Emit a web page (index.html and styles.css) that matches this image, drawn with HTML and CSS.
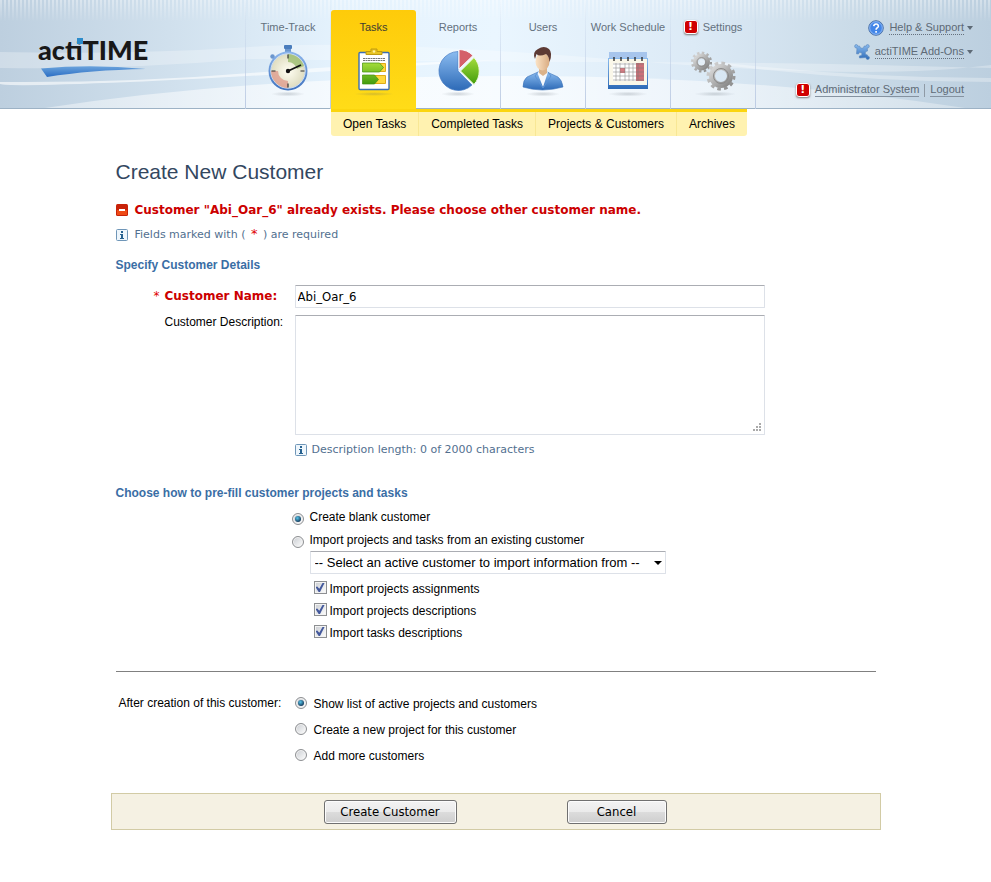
FILE: index.html
```html
<!DOCTYPE html>
<html lang="en">
<head>
<meta charset="utf-8">
<title>actiTIME - Create New Customer</title>
<link rel="stylesheet" href="styles.css">
</head>
<body>
<header class="header">
  <svg class="waves" viewBox="0 0 991 108" preserveAspectRatio="none" aria-hidden="true">
    <defs>
      <linearGradient id="hill" x1="0" x2="1" y1="0" y2="0">
        <stop offset="0" stop-color="#fff" stop-opacity=".4"/>
        <stop offset=".4" stop-color="#fff" stop-opacity=".7"/>
        <stop offset="1" stop-color="#fff" stop-opacity=".3"/>
      </linearGradient>
    </defs>
    <path d="M0 52Q130 55 250 47T620 60T991 65V68Q800 62 620 62T250 59Q120 70 0 68Z" fill="#fff" opacity=".28"/>
    <path d="M0 82Q130 83 250 73T500 60Q250 77 130 82T0 84Z" fill="#fff" opacity=".6"/>
    <path d="M700 60Q850 78 991 78V82Q850 82 700 62Z" fill="#fff" opacity=".3"/>
    <path d="M45 108Q250 77 500 76T965 108Z" fill="url(#hill)"/>
  </svg>
  <a class="logo" href="#">acti<span>TIME</span>
    <svg viewBox="0 0 108 12" aria-hidden="true"><defs><linearGradient id="sw" x1="0" x2="0" y1="0" y2="1"><stop offset="0" stop-color="#6aa3dc"/><stop offset="1" stop-color="#2a6dc4"/></linearGradient></defs><path d="M1 2.500Q52-2 106 3Q50 4 7 11Z" fill="url(#sw)"/></svg>
  </a>
  <nav class="tabs" aria-label="Main">
    <a class="tab" href="#"><span class="tab-name">Time-Track</span>
      <svg viewBox="0 0 48 54"><defs><linearGradient id="ring" x1="0" x2="0" y1="0" y2="1"><stop offset="0" stop-color="#8bb5ec"/><stop offset="1" stop-color="#3f72be"/></linearGradient><radialGradient id="face"><stop offset="0" stop-color="#fffef2"/><stop offset="1" stop-color="#dedcc0"/></radialGradient><radialGradient id="shade"><stop offset="0" stop-color="#55606b" stop-opacity=".25"/><stop offset="1" stop-color="#55606b" stop-opacity="0"/></radialGradient></defs>
      <ellipse cx="24" cy="50" rx="17" ry="2.500" fill="url(#shade)"/><path d="m9 13 4 4" stroke="#6b96cd" stroke-width="2"/><rect x="21" y="3" width="6" height="6" fill="#6b96cd"/><rect x="20" y="1" width="8" height="4" rx="1" fill="#4a7dbd"/><circle cx="8.500" cy="12.500" r="2.200" fill="#6b96cd"/><circle cx="24" cy="27" r="19.500" fill="url(#ring)"/><circle cx="24" cy="27" r="17.200" fill="url(#face)" stroke="#c9dcf5"/><path d="M24 10a17 17 0 0 1 16 12l-7 3a10 10 0 0 0-9-7Z" fill="#96b968" opacity=".75"/><path d="M7 27a17 17 0 0 0 17 17v-7a10 10 0 0 1-10-10Z" fill="#df9e8e" opacity=".8"/><path d="M24 10.500v4M24 39.500v4M7.500 27h4M36.500 27h4" stroke="#333" stroke-width="1.200"/><path d="M23 27.500 37 21" stroke="#111" stroke-width="1.800"/><circle cx="24" cy="27" r="2.200" fill="#111"/></svg></a>
    <a class="tab active" href="#"><span class="tab-name">Tasks</span>
      <svg viewBox="0 0 48 54"><defs><linearGradient id="grn" x1="0" x2="0" y1="0" y2="1"><stop offset="0" stop-color="#a4dc3b"/><stop offset="1" stop-color="#429c0c"/></linearGradient></defs>
      <ellipse cx="24" cy="50" rx="20" ry="2" fill="url(#shade)"/><rect x="9" y="8.500" width="30" height="37" rx="1" fill="#fff" stroke="#3c6eb4" stroke-width="1.400"/><path d="M16 10.500V7.500h5V5h6v2.500h5v3Z" fill="#e7c321" stroke="#bf9a10"/><circle cx="24" cy="7.500" r="1.200" fill="#fff0a0"/><path d="M13 14.500h22M13 16.500h22" stroke="#777" stroke-dasharray="2 .5"/><path d="M13.500 19.500h22v8h-22zM13.500 31.500h22v8h-22z" fill="#ffd83c" stroke="#e0ac16"/><path d="M12.500 19h17l4 4.500-4 4.500h-17zM12.500 31h12l4 4.500-4 4.500h-12z" fill="url(#grn)" stroke="#43910f" stroke-width=".7"/></svg></a>
    <a class="tab" href="#"><span class="tab-name">Reports</span>
      <svg viewBox="0 0 48 54"><defs><linearGradient id="blu" x1="0" x2="0" y1="0" y2="1"><stop offset="0" stop-color="#8bbcf0"/><stop offset="1" stop-color="#2d6ab7"/></linearGradient></defs><ellipse cx="24" cy="50" rx="17" ry="2.500" fill="url(#shade)"/><path d="M24 7.500A19.500 19.500 0 1 0 38 41L24 27Z" fill="url(#blu)" stroke="#4a7ec4" stroke-width=".7"/><path d="M25 25V5.500a20 20 0 0 1 14 6Z" fill="#d4606a" stroke="#f7fbff"/><path d="M26.500 27 40 13.500a20 20 0 0 1 0 27Z" fill="url(#grn)" stroke="#f2fae8"/></svg></a>
    <a class="tab" href="#"><span class="tab-name">Users</span>
      <svg viewBox="0 0 48 54"><defs><linearGradient id="skin"><stop offset="0" stop-color="#fbe3c6"/><stop offset="1" stop-color="#d9ab81"/></linearGradient></defs><ellipse cx="24" cy="50" rx="17" ry="2.500" fill="url(#shade)"/><path d="M19 28 8 33Q4 36 4 43Q23 49 44 43Q43 36 39 33L28 28Z" fill="url(#blu)" stroke="#3e74b8" stroke-width=".6"/><path d="M18 28h11l-5 15Z" fill="#f5f8fc"/><path d="M19 28 16 32l8 12M29 28l3 4-8 12" stroke="#5c92d4" fill="none"/><path d="M20 22h8v7l-4 3-4-3Z" fill="#dbb289"/><ellipse cx="23.500" cy="17.500" rx="7" ry="9" fill="url(#skin)"/><path d="M16 15Q13 8 19 5Q25 1 30 5Q34 9 30.500 18Q30 12 27 10Q20 13 17.500 10Z" fill="#5d3a34"/></svg></a>
    <a class="tab" href="#"><span class="tab-name">Work Schedule</span>
      <svg viewBox="0 0 48 54"><ellipse cx="24" cy="50" rx="20" ry="2.500" fill="url(#shade)"/><path d="M5 8h38v20H5z" fill="#a7c5ec"/><path d="M4 14h40v31H4z" fill="url(#blu)"/><path d="M5 15h38v26H5z" fill="#faf7e9"/><path d="M9 19h30v18H9z" fill="#fff"/><path d="M16 24h5v5h-5z" fill="#d67c82"/><path d="M32 19h8v18h-8z" fill="#cb7078"/><path d="M9 20h31M9 24h31M9 28h31M9 32h31M9 36h31M12 19v18M16 19v18M21 19v18M25 19v18M29 19v18M34 19v18" stroke="#777" stroke-width=".6" opacity=".8"/><path d="M10 13v4M17 13v4M24 13v4M31 13v4M38 13v4" stroke="#222" stroke-width="1.300"/></svg></a>
    <a class="tab" href="#"><span class="tab-name"><i class="alert">!</i>Settings</span>
      <svg viewBox="0 0 48 54"><defs><linearGradient id="met" x1="0" x2="1" y1="0" y2="1"><stop offset="0" stop-color="#dadada"/><stop offset="1" stop-color="#858585"/></linearGradient></defs><ellipse cx="26" cy="50" rx="21" ry="2.500" fill="url(#shade)"/><g fill="none" stroke="url(#met)"><circle cx="12.500" cy="18" r="6" stroke-width="5"/><circle cx="12.500" cy="18" r="9.300" stroke-width="2.500" stroke-dasharray="2.500 2.369"/><circle cx="32" cy="32" r="9" stroke-width="6"/><circle cx="32" cy="32" r="13" stroke-width="3" stroke-dasharray="3.600 3.206"/></g><circle cx="32" cy="32" r="7.500" fill="none" stroke="#8a8a8a"/><circle cx="12.500" cy="18" r="4.500" fill="none" stroke="#888" stroke-width=".7"/></svg></a>
  </nav>
  <div class="account">
    <div class="row menu"><svg viewBox="0 0 16 16"><circle cx="8" cy="8" r="7.300" fill="#4386e8" stroke="#5276a8"/><circle cx="8" cy="8" r="6.300" fill="none" stroke="#a9cbfa" stroke-width=".7"/><path d="M5.700 6.200Q6 4 8.100 4T10.400 6.200Q10.300 7.300 9 8Q8.100 8.500 8.100 9.700M8.100 11v1.700" fill="none" stroke="#fff" stroke-width="1.600"/></svg><a class="dotted" href="#">Help &amp; Support</a><b class="caret"></b></div>
    <div class="row menu"><svg viewBox="0 0 16 16"><path d="M3.700 2.200L5.500 2Q6 4.300 8 4.300T10.200 2L12.200 2.200Q12 .5 13.700 .5Q15.500 .8 15.300 2.600Q15 4 13.300 4.200L13.500 7Q11.200 7 11.200 9T13.500 11L13.600 12.200Q15.500 12 15.500 13.800Q15.200 15.600 13.600 15.500Q11.800 15.300 12 13.500L5.500 14L5.300 12Q8 12 8 10T5.500 8.600Q4.600 8.700 4.500 10L2.500 9.800L3 4.200Q.8 4.200 .6 2.500Q.7 .5 2.300 .4Q3.700 .6 3.700 2.200Z" fill="url(#blu)" stroke="#5b87ba" stroke-width=".6"/></svg><a class="dotted" href="#">actiTIME Add-Ons</a><b class="caret"></b></div>
    <div class="row user"><i class="alert">!</i><a href="#">Administrator System</a><span class="bar"></span><a href="#">Logout</a></div>
  </div>
</header>
<nav class="submenu" aria-label="Tasks">
  <a href="#">Open Tasks</a><a href="#">Completed Tasks</a><a href="#">Projects &amp; Customers</a><a href="#">Archives</a>
</nav>
<main class="page">
  <form>
    <div class="body">
      <h1>Create New Customer</h1>
      <p class="error"><svg viewBox="0 0 12 12" aria-hidden="true"><rect width="12" height="12" rx="1.500" fill="#c82208"/><rect x="1" y="6" width="10" height="5" fill="#ee4a16"/><path d="M3 5h6v2H3z" fill="#fff"/></svg>Customer "Abi_Oar_6" already exists. Please choose other customer name.</p>
      <p class="note"><svg class="info" viewBox="0 0 12 12" aria-hidden="true"><rect x=".5" y=".5" width="11" height="11" rx="1" fill="#eef6fc" stroke="#6f96b8"/><path d="M5 2h2v2H5zM4 5h3v4h1v1H4V9h1V6H4z" fill="#26618f"/></svg><span>Fields marked with ( <em>*</em> ) are required</span></p>
      <h2>Specify Customer Details</h2>
      <div class="fields">
        <label class="bad" for="name"><em>*</em>Customer Name:</label>
        <input class="text" id="name" type="text" value="Abi_Oar_6">
        <label for="desc">Customer Description:</label>
        <textarea class="text" id="desc"></textarea>
        <p class="note length"><svg class="info" viewBox="0 0 12 12" aria-hidden="true"><rect x=".5" y=".5" width="11" height="11" rx="1" fill="#eef6fc" stroke="#6f96b8"/><path d="M5 2h2v2H5zM4 5h3v4h1v1H4V9h1V6H4z" fill="#26618f"/></svg>Description length: 0 of 2000 characters</p>
      </div>
      <h2>Choose how to pre-fill customer projects and tasks</h2>
      <div class="prefill">
        <label><input type="radio" name="fill" checked>Create blank customer</label>
        <label><input type="radio" name="fill">Import projects and tasks from an existing customer</label>
        <div class="import">
          <div class="select"><select aria-label="Active customer"><option>-- Select an active customer to import information from --</option></select></div>
          <label><input type="checkbox" checked>Import projects assignments</label>
          <label><input type="checkbox" checked>Import projects descriptions</label>
          <label><input type="checkbox" checked>Import tasks descriptions</label>
        </div>
      </div>
      <hr>
      <div class="after" role="radiogroup" aria-labelledby="after">
        <span id="after">After creation of this customer:</span>
        <div>
          <label><input type="radio" name="after" checked>Show list of active projects and customers</label>
          <label><input type="radio" name="after">Create a new project for this customer</label>
          <label><input type="radio" name="after">Add more customers</label>
        </div>
      </div>
    </div>
    <div class="actions">
      <button class="create" type="button">Create Customer</button>
      <button class="cancel" type="button">Cancel</button>
    </div>
  </form>
</main>
</body>
</html>
```
FILE: styles.css
```css
* { box-sizing: border-box; }
body { margin: 0; background: #fff; color: #000; font: 12px/18px "Liberation Sans", Arial, sans-serif; }
p, h1, h2 { margin: 0; }
em, i { font-style: normal; }
svg { display: block; flex: none; }

.header { position: relative; display: grid; grid-template-columns: 245px auto 1fr; height: 109px; border-bottom: 1px solid #9db2c5; background: linear-gradient(90deg, #bdcfdf 0, #d0e0ed 17%, #e4f2fd 34%, #eaf6ff 50%, #dceaf6 70%, #cadbe8 86%, #bccfdf 100%); }
.header::before { content: ""; position: absolute; inset: 0 0 auto; height: 22px; background: repeating-linear-gradient(90deg, #ffffff60 0 2px, transparent 2px 4px); mask-image: linear-gradient(#000, transparent); }
.waves { position: absolute; inset: 0; width: 100%; height: 108px; }
.logo { position: relative; margin: 32px 0 0 38px; width: 110px; height: 46px; color: #181818; font: 900 27px/36px "Lato", sans-serif; text-decoration: none; }
.logo::after { content: ""; position: absolute; left: 39px; top: 6px; width: 6px; height: 6px; background: #2c8ccb; }
.logo svg { position: absolute; left: 2px; top: 34px; width: 108px; height: 12px; }

.tabs { position: relative; display: flex; border-left: 1px solid; border-image: linear-gradient(#cad8ea00, #bccbe3) 1; }
.tab { display: flex; flex-direction: column; align-items: center; width: 85px; padding-top: 18px; border-right: 1px solid; border-image: linear-gradient(#cad8ea00, #bccbe3) 1; color: #64717e; font-size: 11px; text-decoration: none; white-space: nowrap; }
.tab svg { width: 48px; height: 54px; }
.tab-name { display: flex; align-items: center; gap: 5px; height: 18px; margin-bottom: 8px; }
.active { margin-top: 10px; padding-top: 8px; height: 99px; border: 0; border-radius: 3px 3px 0 0; background: linear-gradient(#fecb0a, #ffdc18); color: #3e3e30; }
.alert { width: 14px; height: 14px; border: 1px solid #fff; border-radius: 3px; background: #d00000; box-shadow: 0 1px 2px #777; color: #fff; font: bold 11px/12px "DejaVu Sans", sans-serif; text-align: center; }

.account { position: relative; display: flex; flex-direction: column; padding: 16px 18px 0 0; font-size: 11px; }
.row { display: flex; justify-content: flex-end; align-items: center; height: 24px; gap: 5px; }
.row svg { width: 16px; height: 16px; }
.row a { color: #5e6a76; line-height: 13px; text-decoration: none; border-bottom: 1px solid #8592a0; }
.row .dotted { border-bottom: 1px dotted #65717e; }
.caret { border: 3px solid transparent; border-top: 4px solid #5e6a76; border-bottom: 0; margin-left: -2px; }
.user { margin-top: 14px; padding-right: 9px; }
.bar { width: 1px; height: 13px; background: #8f9aa5; }

.submenu { display: flex; width: fit-content; height: 27px; margin-left: 331px; border-top: 3px solid #fbd50f; border-radius: 0 0 3px 3px; background: #fff2b0; }
.submenu a { padding: 3px 12px 0; border-right: 1px solid #f8e795; color: #000; text-decoration: none; }
.submenu a:last-child { border: 0; }

.page { max-width: 770px; margin: 0 auto; padding-top: 24px; }
.body { padding: 0 5px; }
h1 { color: #33475f; font-size: 21px; font-weight: normal; line-height: 24px; }
.error, .note { display: flex; align-items: center; }
.error { gap: 7px; margin-top: 17px; color: #c00; font: bold 12px/18px "DejaVu Sans", Verdana, sans-serif; }
.error svg, .info { width: 12px; height: 12px; }
.note { gap: 7px; margin-top: 7px; color: #52708f; font: 11px/18px "DejaVu Sans", Verdana, sans-serif; }
em { color: #e00000; }
.note em { margin: 0 2px; font-size: 13px; line-height: 1; }
h2 { margin-top: 12px; color: #3a6ea5; font-size: 12px; line-height: 18px; }

.fields { display: grid; grid-template-columns: 173px 470px; column-gap: 6px; row-gap: 7px; margin-top: 11px; }
.fields label { align-items: flex-start; padding-left: 49px; white-space: nowrap; line-height: 14px; }
.fields .bad { padding-left: 38px; color: #c00; font: bold 12px/23px "DejaVu Sans", Verdana, sans-serif; }
.bad em { margin-right: 5px; font-weight: normal; }
.text { width: 100%; margin: 0; padding: 1px 2px; border: 1px solid #dde1e8; border-top-color: #abadb3; border-radius: 1px; background: #fff; font: 13px/18px "DejaVu Sans Condensed", Tahoma, sans-serif; }
input.text { height: 23px; }
textarea { display: block; height: 120px; resize: vertical; }
textarea::-webkit-resizer {
  --dot: linear-gradient(#aaa, #aaa);
  background: linear-gradient(#aaa, #aaa) 10px 4px / 2px 2px no-repeat, linear-gradient(#aaa, #aaa) 7px 7px / 2px 2px no-repeat, linear-gradient(#aaa, #aaa) 10px 7px / 2px 2px no-repeat, linear-gradient(#aaa, #aaa) 4px 10px / 2px 2px no-repeat, linear-gradient(#aaa, #aaa) 7px 10px / 2px 2px no-repeat, linear-gradient(#aaa, #aaa) 10px 10px / 2px 2px no-repeat;
}
.length { grid-column: 2; margin-top: -1px; gap: 5px; }
.fields + h2 { margin-top: 25px; }

label { display: flex; align-items: center; }
input[type="radio"], input[type="checkbox"] { appearance: none; flex: none; width: 12px; height: 12px; margin: 0; display: grid; place-items: center; border: 1px solid #8d8f92; background: linear-gradient(135deg, #c9ccd1, #fff); box-shadow: inset 0 0 0 1px #f3f3f3; }
input[type="radio"] { border-radius: 50%; }
input[type="radio"]:checked::before { content: ""; width: 6px; height: 6px; border-radius: 50%; background: radial-gradient(circle at 40% 35%, #58c5ea, #12385a 75%); }
input[type="checkbox"] { width: 13px; height: 13px; }
input[type="checkbox"]:checked::before { content: ""; width: 9px; height: 9px; background: #43589c; clip-path: polygon(0 45%, 20% 38%, 42% 65%, 78% 0, 100% 0, 50% 100%, 35% 100%); }

.prefill { padding: 3px 0 0 176px; }
.prefill > label { height: 23px; gap: 6px; }
.prefill > label input { margin-top: 4px; }
.import { padding-left: 18px; }
.select { position: relative; width: 356px; margin-bottom: 4px; }
.select::after { content: ""; position: absolute; right: 4px; top: 10px; border: 4px solid transparent; border-top-color: #000; border-bottom: 0; pointer-events: none; }
select { appearance: none; display: block; width: 100%; height: 23px; margin: 0; padding: 0 4px; border: 1px solid #dde1e8; border-top-color: #abadb3; border-radius: 1px; background: #fff; color: #000; font: 13px/20px "Liberation Sans", Arial, sans-serif; }
.import label { height: 22px; gap: 3px; padding-left: 4px; }
.import label input { margin-bottom: 3px; }
hr { height: 1px; margin: 27px 0 0; border: 0; background: #808080; }
.after { display: grid; grid-template-columns: 176px 1fr; padding: 19px 0 24px 3px; }
.after > span { padding-top: 3px; }
.after label { height: 26px; gap: 7px; }
.after label input { margin-bottom: 2px; }

.actions { display: flex; gap: 110px; padding: 6px 0 5px 212px; border: 1px solid #d2cba5; background: #f5f1e3; }
button { height: 24px; padding: 0; border: 1px solid #707070; border-radius: 3px; background: linear-gradient(#f3f3f3, #ebebeb 48%, #dcdcdc 50%, #cecece); box-shadow: inset 0 0 0 1px #fcfcfc; color: #000; font: 13px/20px "DejaVu Sans Condensed", Tahoma, sans-serif; }
.create { width: 133px; }
.cancel { width: 100px; }
```
